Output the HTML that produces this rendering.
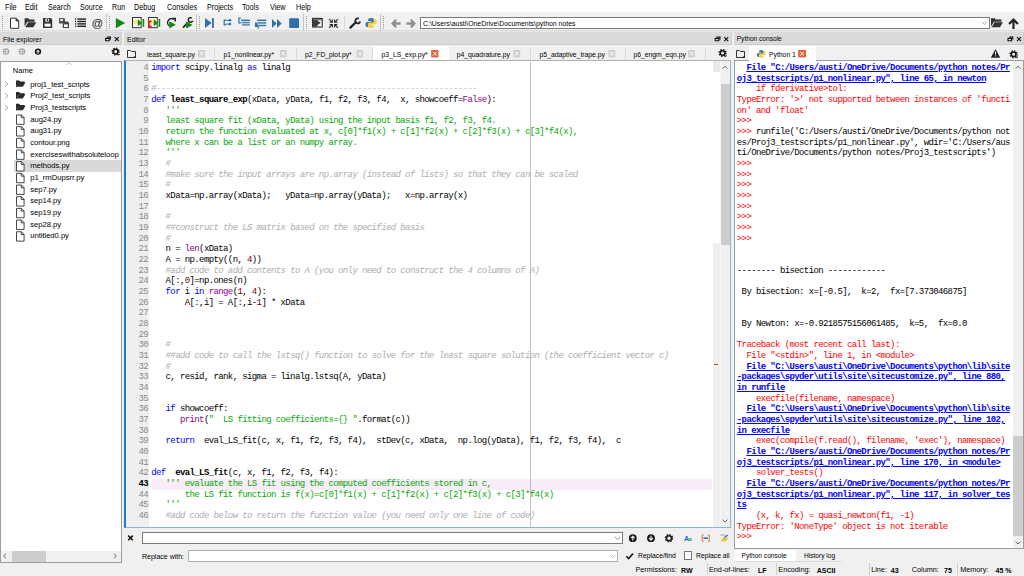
<!DOCTYPE html><html><head><meta charset="utf-8"><style>
*{margin:0;padding:0;box-sizing:border-box}
html,body{width:1024px;height:576px;overflow:hidden;background:#f0f0f0;font-family:"Liberation Sans",sans-serif;color:#000}
.a{position:absolute}
.t{position:absolute;white-space:pre;line-height:1;font-family:"Liberation Sans",sans-serif}
.title{background:#dadada;border-bottom:1px solid #cdcdcd;border-right:1px solid #cdcdcd;border-top:1px solid #e6e6e6}
.box{background:#fff;border:1px solid #a0a0a0}
.code{position:absolute;font-family:"Liberation Mono",monospace;font-size:9px;letter-spacing:-0.61px;line-height:10.667px;white-space:pre;height:10.667px}
.ln{position:absolute;font-family:"Liberation Mono",monospace;font-size:9px;letter-spacing:-0.61px;line-height:10.667px;text-align:right;color:#8a8a8a;width:24px}
.kw{color:#0000ff}.bi{color:#900090}.df{font-weight:bold}.cm{color:#adadad;font-style:italic}.st{color:#00aa00}.nu{color:#800000}
.red{color:#ff0000}.blu{color:#0000ff;font-weight:bold;text-decoration:underline}
</style></head><body>
<div class="a" style="left:0px;top:0px;width:1024px;height:12px;background:#fff"></div>
<div class="t" style="left:4.50px;top:3.66px;font-size:8.2px;transform:scaleX(0.88);transform-origin:0 0;">File</div>
<div class="t" style="left:25.00px;top:3.66px;font-size:8.2px;transform:scaleX(0.88);transform-origin:0 0;">Edit</div>
<div class="t" style="left:47.50px;top:3.66px;font-size:8.2px;transform:scaleX(0.88);transform-origin:0 0;">Search</div>
<div class="t" style="left:79.50px;top:3.66px;font-size:8.2px;transform:scaleX(0.88);transform-origin:0 0;">Source</div>
<div class="t" style="left:112.00px;top:3.66px;font-size:8.2px;transform:scaleX(0.88);transform-origin:0 0;">Run</div>
<div class="t" style="left:134.00px;top:3.66px;font-size:8.2px;transform:scaleX(0.88);transform-origin:0 0;">Debug</div>
<div class="t" style="left:166.70px;top:3.66px;font-size:8.2px;transform:scaleX(0.88);transform-origin:0 0;">Consoles</div>
<div class="t" style="left:206.60px;top:3.66px;font-size:8.2px;transform:scaleX(0.88);transform-origin:0 0;">Projects</div>
<div class="t" style="left:242.30px;top:3.66px;font-size:8.2px;transform:scaleX(0.88);transform-origin:0 0;">Tools</div>
<div class="t" style="left:270.00px;top:3.66px;font-size:8.2px;transform:scaleX(0.88);transform-origin:0 0;">View</div>
<div class="t" style="left:295.50px;top:3.66px;font-size:8.2px;transform:scaleX(0.88);transform-origin:0 0;">Help</div>
<div class="a" style="left:0px;top:12px;width:1024px;height:19px;background:#f0f0f0"></div>
<div class="a" style="left:0px;top:12.5px;width:1024px;height:1.5px;background:#f6f6f6"></div>
<div class="a" style="left:0px;top:30px;width:1024px;height:1px;background:#dcdcdc"></div>
<div class="a" style="left:420px;top:17px;width:570px;height:12px;background:#fff;border:1px solid #7a7a7a"></div>
<div class="t" style="left:423.00px;top:20.96px;font-size:6.9px;">C:\Users\austi\OneDrive\Documents\python notes</div>
<div class="a title" style="left:0;top:31px;width:122px;height:14px"></div>
<div class="t" style="left:3.00px;top:35.87px;font-size:7.0px;">File explorer</div>
<div class="a" style="left:0px;top:61px;width:122px;height:502px;background:#fff;border:1px solid #9c9c9c"></div>
<div class="t" style="left:12.80px;top:66.65px;font-size:7.5px;">Name</div>
<div class="a" style="left:14px;top:160px;width:107px;height:11.5px;background:#d9d9d9"></div>
<div class="a" style="left:1px;top:62px;width:120px;height:488px;overflow:hidden">
<div class="t" style="left:29.2px;top:18.58px;font-size:7.7px;letter-spacing:-0.05px">proj1_test_scripts</div>
<div class="t" style="left:29.2px;top:30.26px;font-size:7.7px;letter-spacing:-0.05px">Proj2_test_scripts</div>
<div class="t" style="left:29.2px;top:41.94px;font-size:7.7px;letter-spacing:-0.05px">Proj3_testscripts</div>
<div class="t" style="left:29.2px;top:53.62px;font-size:7.7px;letter-spacing:-0.05px">aug24.py</div>
<div class="t" style="left:29.2px;top:65.30px;font-size:7.7px;letter-spacing:-0.05px">aug31.py</div>
<div class="t" style="left:29.2px;top:76.98px;font-size:7.7px;letter-spacing:-0.05px">contour.png</div>
<div class="t" style="left:29.2px;top:88.66px;font-size:7.7px;letter-spacing:-0.05px">exerciseswithabsoluteloop</div>
<div class="t" style="left:29.2px;top:100.34px;font-size:7.7px;letter-spacing:-0.05px">methods.py</div>
<div class="t" style="left:29.2px;top:112.02px;font-size:7.7px;letter-spacing:-0.05px">p1_rmDupsrr.py</div>
<div class="t" style="left:29.2px;top:123.70px;font-size:7.7px;letter-spacing:-0.05px">sep7.py</div>
<div class="t" style="left:29.2px;top:135.38px;font-size:7.7px;letter-spacing:-0.05px">sep14.py</div>
<div class="t" style="left:29.2px;top:147.06px;font-size:7.7px;letter-spacing:-0.05px">sep19.py</div>
<div class="t" style="left:29.2px;top:158.74px;font-size:7.7px;letter-spacing:-0.05px">sep28.py</div>
<div class="t" style="left:29.2px;top:170.42px;font-size:7.7px;letter-spacing:-0.05px">untitled0.py</div>
</div>
<div class="a" style="left:1px;top:551px;width:120px;height:11px;background:#f0f0f0"></div>
<div class="a" style="left:12px;top:551px;width:34px;height:11px;background:#cdcdcd"></div>
<svg class="a" style="left:0;top:0" width="124" height="576" viewBox="0 0 124 576"><path d="M5.2 81.60l2.6 2.6-2.6 2.6" fill="none" stroke="#8a8a8a" stroke-width="0.9"/><path d="M16 80.40h3.2l1 1.2h4.4v1.8h-6.2l-2.4 4.4z" fill="#2b2b2b"/><path d="M16.4 86.80l2.6-4.2h6.4l-2.6 4.2z" fill="#2b2b2b"/><path d="M5.2 93.28l2.6 2.6-2.6 2.6" fill="none" stroke="#8a8a8a" stroke-width="0.9"/><path d="M16 92.08h3.2l1 1.2h4.4v1.8h-6.2l-2.4 4.4z" fill="#2b2b2b"/><path d="M16.4 98.48l2.6-4.2h6.4l-2.6 4.2z" fill="#2b2b2b"/><path d="M5.2 104.96l2.6 2.6-2.6 2.6" fill="none" stroke="#8a8a8a" stroke-width="0.9"/><path d="M16 103.76h3.2l1 1.2h4.4v1.8h-6.2l-2.4 4.4z" fill="#2b2b2b"/><path d="M16.4 110.16l2.6-4.2h6.4l-2.6 4.2z" fill="#2b2b2b"/><path d="M16.5 114.94h5l2.6 2.6v6.8h-7.6z" fill="#fff" stroke="#333" stroke-width="0.9"/><path d="M21.3 114.94v2.8h2.8" fill="none" stroke="#333" stroke-width="0.9"/><path d="M16.5 126.62h5l2.6 2.6v6.8h-7.6z" fill="#fff" stroke="#333" stroke-width="0.9"/><path d="M21.3 126.62v2.8h2.8" fill="none" stroke="#333" stroke-width="0.9"/><path d="M16.5 138.30h5l2.6 2.6v6.8h-7.6z" fill="#fff" stroke="#333" stroke-width="0.9"/><path d="M21.3 138.30v2.8h2.8" fill="none" stroke="#333" stroke-width="0.9"/><path d="M16.5 149.98h5l2.6 2.6v6.8h-7.6z" fill="#fff" stroke="#333" stroke-width="0.9"/><path d="M21.3 149.98v2.8h2.8" fill="none" stroke="#333" stroke-width="0.9"/><path d="M16.5 161.66h5l2.6 2.6v6.8h-7.6z" fill="#fff" stroke="#333" stroke-width="0.9"/><path d="M21.3 161.66v2.8h2.8" fill="none" stroke="#333" stroke-width="0.9"/><path d="M16.5 173.34h5l2.6 2.6v6.8h-7.6z" fill="#fff" stroke="#333" stroke-width="0.9"/><path d="M21.3 173.34v2.8h2.8" fill="none" stroke="#333" stroke-width="0.9"/><path d="M16.5 185.02h5l2.6 2.6v6.8h-7.6z" fill="#fff" stroke="#333" stroke-width="0.9"/><path d="M21.3 185.02v2.8h2.8" fill="none" stroke="#333" stroke-width="0.9"/><path d="M16.5 196.70h5l2.6 2.6v6.8h-7.6z" fill="#fff" stroke="#333" stroke-width="0.9"/><path d="M21.3 196.70v2.8h2.8" fill="none" stroke="#333" stroke-width="0.9"/><path d="M16.5 208.38h5l2.6 2.6v6.8h-7.6z" fill="#fff" stroke="#333" stroke-width="0.9"/><path d="M21.3 208.38v2.8h2.8" fill="none" stroke="#333" stroke-width="0.9"/><path d="M16.5 220.06h5l2.6 2.6v6.8h-7.6z" fill="#fff" stroke="#333" stroke-width="0.9"/><path d="M21.3 220.06v2.8h2.8" fill="none" stroke="#333" stroke-width="0.9"/><path d="M16.5 231.74h5l2.6 2.6v6.8h-7.6z" fill="#fff" stroke="#333" stroke-width="0.9"/><path d="M21.3 231.74v2.8h2.8" fill="none" stroke="#333" stroke-width="0.9"/><path d="M66.5 65l2.5-2.5 2.5 2.5" fill="none" stroke="#b0b0b0" stroke-width="0.8"/><path d="M6 553.6l-2.4 2.4 2.4 2.4M114 553.6l2.4 2.4-2.4 2.4" fill="none" stroke="#555" stroke-width="0.9"/></svg>
<div class="a title" style="left:124px;top:31px;width:608px;height:14px"></div>
<div class="t" style="left:127.00px;top:35.87px;font-size:7.0px;">Editor</div>
<div class="a" style="left:139px;top:47px;width:592px;height:13px;background:#f0f0f0"></div>
<div class="a" style="left:214.2px;top:48px;width:1px;height:12px;background:#dadada"></div>
<div class="t" style="left:147.00px;top:51.84px;font-size:6.8px;">least_square.py</div>
<div class="a" style="left:296.3px;top:48px;width:1px;height:12px;background:#dadada"></div>
<div class="t" style="left:223.50px;top:51.84px;font-size:6.8px;">p1_nonlinear.py*</div>
<div class="a" style="left:372.1px;top:48px;width:1px;height:12px;background:#dadada"></div>
<div class="t" style="left:304.90px;top:51.84px;font-size:6.8px;">p2_FD_plot.py*</div>
<div class="a" style="left:372.6px;top:46px;width:76.79999999999995px;height:15px;background:#fff"></div>
<div class="t" style="left:381.60px;top:51.84px;font-size:6.8px;">p3_LS_exp.py*</div>
<div class="a" style="left:529.8px;top:48px;width:1px;height:12px;background:#dadada"></div>
<div class="t" style="left:456.70px;top:51.84px;font-size:6.8px;">p4_quadrature.py</div>
<div class="a" style="left:624.8px;top:48px;width:1px;height:12px;background:#dadada"></div>
<div class="t" style="left:539.60px;top:51.84px;font-size:6.8px;">p5_adaptive_trape.py</div>
<div class="a" style="left:704.7px;top:48px;width:1px;height:12px;background:#dadada"></div>
<div class="t" style="left:633.40px;top:51.84px;font-size:6.8px;">p6_engm_eqn.py</div>
<div class="a" style="left:139px;top:60px;width:592px;height:1px;background:#c8c8c8"></div>
<div class="a" style="left:124px;top:60px;width:607px;height:468px;background:#fff;border:1px solid #8cb4d8;border-top-color:#b4b0ae;border-left:2px solid #1f78d0"></div>
<div class="a" style="left:126px;top:61px;width:23px;height:466px;background:#efefef"></div>
<div class="a" style="left:734px;top:60px;width:290px;height:489px;background:#fff;border:1px solid #9c9c9c"></div>
<div class="a" style="left:152px;top:479.01px;width:560px;height:10.667px;background:#f7ecf8"></div>
<div class="a" style="left:530px;top:62px;width:1px;height:465px;background:#c0c0c0"></div>
<div class="a" style="left:126px;top:62px;width:586px;height:465px;overflow:hidden">
<div class="ln" style="left:-2px;top:1.00px;">4</div>
<div class="code" style="left:25.2px;top:1.00px"><span class="kw">import</span> scipy.linalg <span class="kw">as</span> linalg</div>
<div class="ln" style="left:-2px;top:11.67px;">5</div>
<div class="code" style="left:25.2px;top:11.67px"></div>
<div class="ln" style="left:-2px;top:22.33px;">6</div>
<div class="code" style="left:25.2px;top:22.33px"><span class="cm">#-------------------------------------------------------------------</span></div>
<div class="ln" style="left:-2px;top:33.00px;">7</div>
<div class="code" style="left:25.2px;top:33.00px"><span class="kw">def</span> <span class="df">least_square_exp</span>(xData, yData, f1, f2, f3, f4,  x, showcoeff=<span class="bi">False</span>):</div>
<div class="ln" style="left:-2px;top:43.67px;">8</div>
<div class="code" style="left:25.2px;top:43.67px">   <span class="st">&#x27;&#x27;&#x27;</span></div>
<div class="ln" style="left:-2px;top:54.34px;">9</div>
<div class="code" style="left:25.2px;top:54.34px">   <span class="st">least square fit (xData, yData) using the input basis f1, f2, f3, f4.</span></div>
<div class="ln" style="left:-2px;top:65.00px;">10</div>
<div class="code" style="left:25.2px;top:65.00px">   <span class="st">return the function evaluated at x, c[0]*f1(x) + c[1]*f2(x) + c[2]*f3(x) + c[3]*f4(x),</span></div>
<div class="ln" style="left:-2px;top:75.67px;">11</div>
<div class="code" style="left:25.2px;top:75.67px">   <span class="st">where x can be a list or an numpy array.</span></div>
<div class="ln" style="left:-2px;top:86.34px;">12</div>
<div class="code" style="left:25.2px;top:86.34px">   <span class="st">&#x27;&#x27;&#x27;</span></div>
<div class="ln" style="left:-2px;top:97.00px;">13</div>
<div class="code" style="left:25.2px;top:97.00px">   <span class="cm">#</span></div>
<div class="ln" style="left:-2px;top:107.67px;">14</div>
<div class="code" style="left:25.2px;top:107.67px">   <span class="cm">#make sure the input arrays are np.array (instead of lists) so that they can be scaled</span></div>
<div class="ln" style="left:-2px;top:118.34px;">15</div>
<div class="code" style="left:25.2px;top:118.34px">   <span class="cm">#</span></div>
<div class="ln" style="left:-2px;top:129.00px;">16</div>
<div class="code" style="left:25.2px;top:129.00px">   xData=np.array(xData);   yData=np.array(yData);   x=np.array(x)</div>
<div class="ln" style="left:-2px;top:139.67px;">17</div>
<div class="code" style="left:25.2px;top:139.67px"></div>
<div class="ln" style="left:-2px;top:150.34px;">18</div>
<div class="code" style="left:25.2px;top:150.34px">   <span class="cm">#</span></div>
<div class="ln" style="left:-2px;top:161.00px;">19</div>
<div class="code" style="left:25.2px;top:161.00px">   <span class="cm">##construct the LS matrix based on the specified basis</span></div>
<div class="ln" style="left:-2px;top:171.67px;">20</div>
<div class="code" style="left:25.2px;top:171.67px">   <span class="cm">#</span></div>
<div class="ln" style="left:-2px;top:182.34px;">21</div>
<div class="code" style="left:25.2px;top:182.34px">   n = <span class="bi">len</span>(xData)</div>
<div class="ln" style="left:-2px;top:193.01px;">22</div>
<div class="code" style="left:25.2px;top:193.01px">   A = np.empty((n, <span class="nu">4</span>))</div>
<div class="ln" style="left:-2px;top:203.67px;">23</div>
<div class="code" style="left:25.2px;top:203.67px">   <span class="cm">#add code to add contents to A (you only need to construct the 4 columns of A)</span></div>
<div class="ln" style="left:-2px;top:214.34px;">24</div>
<div class="code" style="left:25.2px;top:214.34px">   A[:,<span class="nu">0</span>]=np.ones(n)</div>
<div class="ln" style="left:-2px;top:225.01px;">25</div>
<div class="code" style="left:25.2px;top:225.01px">   <span class="kw">for</span> i <span class="kw">in</span> <span class="bi">range</span>(<span class="nu">1</span>, <span class="nu">4</span>):</div>
<div class="ln" style="left:-2px;top:235.67px;">26</div>
<div class="code" style="left:25.2px;top:235.67px">       A[:,i] = A[:,i-<span class="nu">1</span>] * xData</div>
<div class="ln" style="left:-2px;top:246.34px;">27</div>
<div class="code" style="left:25.2px;top:246.34px"></div>
<div class="ln" style="left:-2px;top:257.01px;">28</div>
<div class="code" style="left:25.2px;top:257.01px"></div>
<div class="ln" style="left:-2px;top:267.68px;">29</div>
<div class="code" style="left:25.2px;top:267.68px"></div>
<div class="ln" style="left:-2px;top:278.34px;">30</div>
<div class="code" style="left:25.2px;top:278.34px">   <span class="cm">#</span></div>
<div class="ln" style="left:-2px;top:289.01px;">31</div>
<div class="code" style="left:25.2px;top:289.01px">   <span class="cm">##add code to call the lstsq() function to solve for the least square solution (the coefficient vector c)</span></div>
<div class="ln" style="left:-2px;top:299.68px;">32</div>
<div class="code" style="left:25.2px;top:299.68px">   <span class="cm">#</span></div>
<div class="ln" style="left:-2px;top:310.34px;">33</div>
<div class="code" style="left:25.2px;top:310.34px">   c, resid, rank, sigma = linalg.lstsq(A, yData)</div>
<div class="ln" style="left:-2px;top:321.01px;">34</div>
<div class="code" style="left:25.2px;top:321.01px"></div>
<div class="ln" style="left:-2px;top:331.68px;">35</div>
<div class="code" style="left:25.2px;top:331.68px"></div>
<div class="ln" style="left:-2px;top:342.34px;">36</div>
<div class="code" style="left:25.2px;top:342.34px">   <span class="kw">if</span> showcoeff:</div>
<div class="ln" style="left:-2px;top:353.01px;">37</div>
<div class="code" style="left:25.2px;top:353.01px">      <span class="bi">print</span>(<span class="st">&quot;  LS fitting coefficients={} &quot;</span>.format(c))</div>
<div class="ln" style="left:-2px;top:363.68px;">38</div>
<div class="code" style="left:25.2px;top:363.68px"></div>
<div class="ln" style="left:-2px;top:374.34px;">39</div>
<div class="code" style="left:25.2px;top:374.34px">   <span class="kw">return</span>  eval_LS_fit(c, x, f1, f2, f3, f4),  stDev(c, xData,  np.log(yData), f1, f2, f3, f4),  c</div>
<div class="ln" style="left:-2px;top:385.01px;">40</div>
<div class="code" style="left:25.2px;top:385.01px"></div>
<div class="ln" style="left:-2px;top:395.68px;">41</div>
<div class="code" style="left:25.2px;top:395.68px"></div>
<div class="ln" style="left:-2px;top:406.35px;">42</div>
<div class="code" style="left:25.2px;top:406.35px"><span class="kw">def</span>  <span class="df">eval_LS_fit</span>(c, x, f1, f2, f3, f4):</div>
<div class="ln" style="left:-2px;top:417.01px;color:#000;font-weight:bold">43</div>
<div class="code" style="left:25.2px;top:417.01px">   <span class="st">&#x27;&#x27;&#x27; evaluate the LS fit using the computed coefficients stored in c,</span></div>
<div class="ln" style="left:-2px;top:427.68px;">44</div>
<div class="code" style="left:25.2px;top:427.68px">       <span class="st">the LS fit function is f(x)=c[0]*f1(x) + c[1]*f2(x) + c[2]*f3(x) + c[3]*f4(x)</span></div>
<div class="ln" style="left:-2px;top:438.35px;">45</div>
<div class="code" style="left:25.2px;top:438.35px">   <span class="st">&#x27;&#x27;&#x27;</span></div>
<div class="ln" style="left:-2px;top:449.01px;">46</div>
<div class="code" style="left:25.2px;top:449.01px">   <span class="cm">#add code below to return the function value (you need only one line of code)</span></div>
</div>
<div class="a" style="left:735px;top:62px;width:277px;height:486px;overflow:hidden">
<div class="code" style="left:1.8px;top:1.00px">  <span class="blu">File &quot;C:/Users/austi/OneDrive/Documents/python notes/Pr</span></div>
<div class="code" style="left:1.8px;top:11.67px"><span class="blu">oj3_testscripts/p1_nonlinear.py&quot;, line 65, in newton</span></div>
<div class="code" style="left:1.8px;top:22.33px"><span class="red">    if fderivative&gt;tol:</span></div>
<div class="code" style="left:1.8px;top:33.00px"><span class="red">TypeError: &#x27;&gt;&#x27; not supported between instances of &#x27;functi</span></div>
<div class="code" style="left:1.8px;top:43.67px"><span class="red">on&#x27; and &#x27;float&#x27;</span></div>
<div class="code" style="left:1.8px;top:54.34px"><span class="red">&gt;&gt;&gt;</span></div>
<div class="code" style="left:1.8px;top:65.00px"><span class="red">&gt;&gt;&gt; </span><span class="">runfile(&#x27;C:/Users/austi/OneDrive/Documents/python not</span></div>
<div class="code" style="left:1.8px;top:75.67px"><span class="">es/Proj3_testscripts/p1_nonlinear.py&#x27;, wdir=&#x27;C:/Users/aus</span></div>
<div class="code" style="left:1.8px;top:86.34px"><span class="">ti/OneDrive/Documents/python notes/Proj3_testscripts&#x27;)</span></div>
<div class="code" style="left:1.8px;top:97.00px"><span class="red">&gt;&gt;&gt;</span></div>
<div class="code" style="left:1.8px;top:107.67px"><span class="red">&gt;&gt;&gt;</span></div>
<div class="code" style="left:1.8px;top:118.34px"><span class="red">&gt;&gt;&gt;</span></div>
<div class="code" style="left:1.8px;top:129.00px"><span class="red">&gt;&gt;&gt;</span></div>
<div class="code" style="left:1.8px;top:139.67px"><span class="red">&gt;&gt;&gt;</span></div>
<div class="code" style="left:1.8px;top:150.34px"><span class="red">&gt;&gt;&gt;</span></div>
<div class="code" style="left:1.8px;top:161.00px"><span class="red">&gt;&gt;&gt;</span></div>
<div class="code" style="left:1.8px;top:171.67px"><span class="red">&gt;&gt;&gt;</span></div>
<div class="code" style="left:1.8px;top:182.34px"></div>
<div class="code" style="left:1.8px;top:193.01px"></div>
<div class="code" style="left:1.8px;top:203.67px"><span class="">-------- bisection ------------</span></div>
<div class="code" style="left:1.8px;top:214.34px"></div>
<div class="code" style="left:1.8px;top:225.01px"><span class=""> By bisection: x=[-0.5],  k=2,  fx=[7.373046875]</span></div>
<div class="code" style="left:1.8px;top:235.67px"></div>
<div class="code" style="left:1.8px;top:246.34px"></div>
<div class="code" style="left:1.8px;top:257.01px"><span class=""> By Newton: x=-0.9218575156061485,  k=5,  fx=0.0</span></div>
<div class="code" style="left:1.8px;top:267.68px"></div>
<div class="code" style="left:1.8px;top:278.34px"><span class="red">Traceback (most recent call last):</span></div>
<div class="code" style="left:1.8px;top:289.01px"><span class="red">  File &quot;&lt;stdin&gt;&quot;, line 1, in &lt;module&gt;</span></div>
<div class="code" style="left:1.8px;top:299.68px">  <span class="blu">File &quot;C:\Users\austi\OneDrive\Documents\python\lib\site</span></div>
<div class="code" style="left:1.8px;top:310.34px"><span class="blu">-packages\spyder\utils\site\sitecustomize.py&quot;, line 880,</span></div>
<div class="code" style="left:1.8px;top:321.01px"><span class="blu">in runfile</span></div>
<div class="code" style="left:1.8px;top:331.68px"><span class="red">    execfile(filename, namespace)</span></div>
<div class="code" style="left:1.8px;top:342.34px">  <span class="blu">File &quot;C:\Users\austi\OneDrive\Documents\python\lib\site</span></div>
<div class="code" style="left:1.8px;top:353.01px"><span class="blu">-packages\spyder\utils\site\sitecustomize.py&quot;, line 102,</span></div>
<div class="code" style="left:1.8px;top:363.68px"><span class="blu">in execfile</span></div>
<div class="code" style="left:1.8px;top:374.34px"><span class="red">    exec(compile(f.read(), filename, &#x27;exec&#x27;), namespace)</span></div>
<div class="code" style="left:1.8px;top:385.01px">  <span class="blu">File &quot;C:/Users/austi/OneDrive/Documents/python notes/Pr</span></div>
<div class="code" style="left:1.8px;top:395.68px"><span class="blu">oj3_testscripts/p1_nonlinear.py&quot;, line 170, in &lt;module&gt;</span></div>
<div class="code" style="left:1.8px;top:406.35px"><span class="red">    solver_tests()</span></div>
<div class="code" style="left:1.8px;top:417.01px">  <span class="blu">File &quot;C:/Users/austi/OneDrive/Documents/python notes/Pr</span></div>
<div class="code" style="left:1.8px;top:427.68px"><span class="blu">oj3_testscripts/p1_nonlinear.py&quot;, line 117, in solver_tes</span></div>
<div class="code" style="left:1.8px;top:438.35px"><span class="blu">ts</span></div>
<div class="code" style="left:1.8px;top:449.01px"><span class="red">    (x, k, fx) = quasi_newton(f1, -1)</span></div>
<div class="code" style="left:1.8px;top:459.68px"><span class="red">TypeError: &#x27;NoneType&#x27; object is not iterable</span></div>
<div class="code" style="left:1.8px;top:470.35px"><span class="red">&gt;&gt;&gt;</span></div>
</div>
<div class="a title" style="left:734px;top:31px;width:290px;height:14px"></div>
<div class="t" style="left:736.70px;top:36.21px;font-size:6.6px;">Python console</div>
<div class="a" style="left:748.6px;top:46px;width:67.3px;height:15px;background:#fff"></div>
<div class="t" style="left:769.00px;top:51.84px;font-size:6.8px;">Python 1</div>
<div class="a" style="left:712.5px;top:61px;width:7px;height:11px;background:#e8e8e8"></div>
<div class="a" style="left:712.5px;top:243px;width:7px;height:284px;background:#efefef"></div>
<div class="a" style="left:720px;top:61px;width:10px;height:466px;background:#f0f0f0"></div>
<div class="a" style="left:720px;top:84px;width:10px;height:160.5px;background:#cdcdcd"></div>
<div class="a" style="left:713.6px;top:364px;width:4.8px;height:1.2px;background:#e8300a"></div>
<div class="a" style="left:719.5px;top:61px;width:1px;height:466px;background:#f8f8f8"></div>
<svg class="a" style="left:700px;top:55px" width="40" height="480" viewBox="700 55 40 480"><path d="M722.6 68.6l2.4-2.4 2.4 2.4M722.6 519.6l2.4 2.4 2.4-2.4" fill="none" stroke="#555" stroke-width="0.9"/></svg>
<div class="a" style="left:142px;top:532px;width:481px;height:12px;background:#fff;border:1px solid #7a7a7a"></div>
<div class="a" style="left:188px;top:550.4px;width:430px;height:11.2px;background:#fff;border:1px solid #b0b0b0"></div>
<div class="t" style="left:142.00px;top:553.27px;font-size:7.0px;">Replace with:</div>
<div class="t" style="left:638.00px;top:553.44px;font-size:6.8px;">Replace/find</div>
<div class="t" style="left:696.00px;top:553.44px;font-size:6.8px;">Replace all</div>
<div class="a" style="left:684px;top:551px;width:8.4px;height:9px;background:#fff;border:1px solid #777"></div>
<svg class="a" style="left:0;top:0" width="1024" height="576" viewBox="0 0 1024 576"><path d="M128.2 535.6l4.6 4.6M132.8 535.6l-4.6 4.6" stroke="#111" stroke-width="1.5"/><path d="M615 537l2.6 2.6 2.6-2.6" fill="none" stroke="#777" stroke-width="0.8"/><path d="M610 555l2.6 2.6 2.6-2.6" fill="none" stroke="#aaa" stroke-width="0.8"/><circle cx="632.8" cy="538.2" r="3.9" fill="#1a1a1a"/><path d="M632.8 540.6v-4M630.9 538.2l1.9-2 1.9 2" fill="none" stroke="#fff" stroke-width="1.1"/><circle cx="651" cy="538.2" r="3.9" fill="#1a1a1a"/><path d="M651 535.8v4M649.1 538.2l1.9 2 1.9-2" fill="none" stroke="#fff" stroke-width="1.1"/><circle cx="669" cy="538.2" r="2.5" fill="none" stroke="#1a1a1a" stroke-width="1.6"/><circle cx="669" cy="538.2" r="3.6" fill="none" stroke="#1a1a1a" stroke-width="1.4" stroke-dasharray="1.4 1.42"/><text x="684" y="541" font-family="Liberation Sans" font-weight="bold" font-size="7" fill="#2060d0">A</text><text x="688.6" y="541" font-family="Liberation Sans" font-weight="bold" font-size="6" fill="#30a030">a</text><path d="M703.6 535h-1.4v6.4h1.4M707.8 535h1.4v6.4h-1.4" fill="none" stroke="#e07030" stroke-width="1"/><rect x="703.4" y="537.4" width="4.6" height="1.6" fill="#2878d0"/><path d="M721 541.2l2-3.6h5l-2 3.6z" fill="#f0c030"/><path d="M723.4 537.4l3.4-3 1.4 1.2-2.4 2z" fill="#3a7ad0"/><path d="M720.6 535h4" stroke="#888" stroke-width="0.8"/><path d="M626.4 556.2l2.2 2.4 4.4-5" fill="none" stroke="#1a1a1a" stroke-width="1.6"/></svg>
<div class="a" style="left:1012.7px;top:61px;width:10.3px;height:487px;background:#f0f0f0"></div>
<div class="a" style="left:1012.7px;top:436px;width:10.3px;height:100px;background:#cdcdcd"></div>
<div class="a" style="left:734.5px;top:549.5px;width:61.5px;height:12px;background:#fff"></div>
<div class="a" style="left:734px;top:561px;width:108px;height:1px;background:#dcdcdc"></div>
<div class="t" style="left:741.50px;top:553.01px;font-size:6.6px;">Python console</div>
<div class="t" style="left:804.00px;top:553.01px;font-size:6.6px;">History log</div>
<svg class="a" style="left:1000px;top:55px" width="24" height="500" viewBox="1000 55 24 500"><path d="M1015.6 68.6l2.4-2.4 2.4 2.4M1015.6 541.6l2.4 2.4 2.4-2.4" fill="none" stroke="#555" stroke-width="0.9"/></svg>
<div class="t" style="left:635.50px;top:566.46px;font-size:7.25px;">Permissions:</div>
<div class="t" style="left:681.00px;top:566.67px;font-size:7.0px;font-weight:bold">RW</div>
<div class="a" style="left:707px;top:563px;width:1px;height:12px;background:#d0d0d0"></div>
<div class="t" style="left:709.00px;top:566.46px;font-size:7.25px;">End-of-lines:</div>
<div class="t" style="left:758.00px;top:566.67px;font-size:7.0px;font-weight:bold">LF</div>
<div class="a" style="left:775.5px;top:563px;width:1px;height:12px;background:#d0d0d0"></div>
<div class="t" style="left:778.30px;top:566.46px;font-size:7.25px;">Encoding:</div>
<div class="t" style="left:816.70px;top:566.67px;font-size:7.0px;font-weight:bold">ASCII</div>
<div class="a" style="left:868.5px;top:563px;width:1px;height:12px;background:#d0d0d0"></div>
<div class="t" style="left:871.20px;top:566.46px;font-size:7.25px;">Line:</div>
<div class="t" style="left:890.80px;top:566.67px;font-size:7.0px;font-weight:bold">43</div>
<div class="t" style="left:911.80px;top:566.46px;font-size:7.25px;">Column:</div>
<div class="t" style="left:944.00px;top:566.67px;font-size:7.0px;font-weight:bold">75</div>
<div class="a" style="left:957px;top:563px;width:1px;height:12px;background:#d0d0d0"></div>
<div class="t" style="left:960.20px;top:566.46px;font-size:7.25px;">Memory:</div>
<div class="t" style="left:995.50px;top:566.67px;font-size:7.0px;font-weight:bold">45 %</div>
<svg class="a" style="left:0;top:0" width="1024" height="576" viewBox="0 0 1024 576">
<g fill="#9a9a9a">
<rect x="2" y="16" width="1" height="1"/><rect x="2" y="18" width="1" height="1"/><rect x="2" y="20" width="1" height="1"/><rect x="2" y="22" width="1" height="1"/><rect x="2" y="24" width="1" height="1"/><rect x="2" y="26" width="1" height="1"/><rect x="2" y="28" width="1" height="1"/>
</g>
<g fill="#9a9a9a">
<rect x="109" y="16" width="1" height="1"/><rect x="109" y="18" width="1" height="1"/><rect x="109" y="20" width="1" height="1"/><rect x="109" y="22" width="1" height="1"/><rect x="109" y="24" width="1" height="1"/><rect x="109" y="26" width="1" height="1"/><rect x="109" y="28" width="1" height="1"/>
<rect x="199" y="16" width="1" height="1"/><rect x="199" y="18" width="1" height="1"/><rect x="199" y="20" width="1" height="1"/><rect x="199" y="22" width="1" height="1"/><rect x="199" y="24" width="1" height="1"/><rect x="199" y="26" width="1" height="1"/><rect x="199" y="28" width="1" height="1"/>
<rect x="306" y="16" width="1" height="1"/><rect x="306" y="18" width="1" height="1"/><rect x="306" y="20" width="1" height="1"/><rect x="306" y="22" width="1" height="1"/><rect x="306" y="24" width="1" height="1"/><rect x="306" y="26" width="1" height="1"/><rect x="306" y="28" width="1" height="1"/>
<rect x="383" y="16" width="1" height="1"/><rect x="383" y="18" width="1" height="1"/><rect x="383" y="20" width="1" height="1"/><rect x="383" y="22" width="1" height="1"/><rect x="383" y="24" width="1" height="1"/><rect x="383" y="26" width="1" height="1"/><rect x="383" y="28" width="1" height="1"/>
</g>
<rect x="344" y="16" width="1" height="13" fill="#dcdcdc"/>
<g fill="#c4c4c4">
<rect x="106" y="14" width="1" height="17"/><rect x="196" y="14" width="1" height="17"/><rect x="303" y="14" width="1" height="17"/><rect x="380" y="14" width="1" height="17"/>
</g>
<!-- new file -->
<path d="M10.5 18.2H16.3L18.7 20.6V28.3H10.5Z" fill="#fff" stroke="#333" stroke-width="1"/>
<path d="M16 18.2V21H18.7" fill="#555" stroke="#333" stroke-width="0.8"/>
<!-- open folder -->
<path d="M24.6 18.3h3.6l1 1.3h5.3v2.2h-7.2l-2.7 4.7z" fill="#333"/>
<path d="M25.3 27.2l3-5h8l-3 5z" fill="#333"/>
<!-- save -->
<path d="M43 18h7.6l1.6 1.6V28H43z" fill="#333"/>
<rect x="45.4" y="18.6" width="3.4" height="3" fill="#fff"/><rect x="46.8" y="19" width="1.2" height="2" fill="#333"/>
<rect x="44.6" y="23.6" width="6" height="3" fill="#fff"/>
<!-- save all -->
<path d="M59 18h5l1 1v4.6h-6z" fill="#555"/><rect x="60.4" y="19" width="2.4" height="2" fill="#fff"/>
<path d="M62.8 21.4h4.8l1.4 1.4V28h-6.2z" fill="#444"/><rect x="64" y="24.4" width="3.8" height="2.6" fill="#fff"/>
<!-- list -->
<g fill="#222"><rect x="75" y="18.4" width="1.2" height="1.4"/><rect x="77.4" y="18.4" width="8.6" height="1.4"/>
<rect x="75" y="20.8" width="1.2" height="1.4"/><rect x="77.4" y="20.8" width="8.6" height="1.4"/>
<rect x="75" y="23.2" width="1.2" height="1.4"/><rect x="77.4" y="23.2" width="8.6" height="1.4"/>
<rect x="75" y="25.6" width="1.2" height="1.4"/><rect x="77.4" y="25.6" width="8.6" height="1.4"/></g>
<!-- @ -->
<text x="91.5" y="27.2" font-family="Liberation Sans" font-size="11.5" fill="#222">@</text>
<!-- run -->
<path d="M115.8 18V28.2L125.2 23.1Z" fill="#118811"/>
<!-- run cell -->
<rect x="132.5" y="17.5" width="8.6" height="10.2" fill="#fff" stroke="#333" stroke-width="1"/>
<rect x="133" y="19.6" width="7.6" height="4.6" fill="#f8ea8c"/>
<path d="M137.8 19.2V26.6L141.8 22.9Z" fill="#118811"/><rect x="142.6" y="19" width="1.6" height="7.8" fill="#118811"/>
<!-- run cell advance -->
<rect x="148.6" y="17.5" width="8.6" height="10.2" fill="#fff" stroke="#333" stroke-width="1"/>
<rect x="149.1" y="19.6" width="7.6" height="4.6" fill="#f8ea8c"/>
<path d="M153.8 19.2V26.6L157.8 22.9Z" fill="#118811"/><rect x="158.6" y="19" width="1.6" height="7.8" fill="#118811"/>
<path d="M151.6 21.4h-2.6v5h2.6" fill="none" stroke="#ff1010" stroke-width="1.6"/>
<!-- re-run -->
<path d="M173.8 19.4A3.8 3.8 0 1 0 169.2 25.8" fill="none" stroke="#1e1e1e" stroke-width="1.3"/>
<path d="M172.4 18.6h2.8v2.8" fill="none" stroke="#1e1e1e" stroke-width="1.5"/>
<path d="M169.2 21.2V28.4L175.8 24.8Z" fill="#118811"/>
<!-- wrench + run -->
<path d="M183 27.6l5.2-5.2" stroke="#2a2a2a" stroke-width="2"/>
<path d="M191.8 18A2.3 2.3 0 1 0 192.8 20.8" fill="none" stroke="#2a2a2a" stroke-width="1.6"/>
<path d="M186.2 21.4V28.4L192.6 24.9Z" fill="#118811"/>
<!-- debug blue -->
<g fill="#2f6fae">
<path d="M205 18V28L211.6 23Z"/><rect x="212" y="18" width="1.8" height="10"/>
<path d="M223.6 19.6h2.4v1.2h-1.2v3.4h1.2v1.4h-2.4z"/><rect x="226" y="19.8" width="3" height="1"/><rect x="226" y="23.6" width="3" height="1"/><circle cx="230" cy="20.3" r="1.3"/><circle cx="230" cy="24.1" r="1.3"/>
<path d="M238.3 17.5h2.6v1.2h-1.4v3.5h1.4v1.3h-2.6z"/><rect x="241.2" y="19.6" width="8.6" height="1.5"/><rect x="241.6" y="22.1" width="8.2" height="1.2"/><rect x="242" y="24.3" width="7.8" height="1.2"/>
<path d="M255 22.4h2.6v4.2h1.4v1.8h-1.4v-1.4h-2.6z"/><rect x="257.2" y="19.6" width="9" height="1.4"/><rect x="258" y="22.2" width="8.2" height="1.4"/><rect x="257.2" y="24.8" width="9" height="1.4"/>
<path d="M272 19V28L276.6 23.5Z"/><path d="M277 19V28L281.7 23.5Z"/>
<rect x="289.2" y="18.2" width="9.8" height="9.8" rx="0.8"/>
</g>
<!-- maximize -->
<rect x="312.6" y="18.4" width="9.6" height="8.6" fill="#fff" stroke="#2a2a2a" stroke-width="1.1"/>
<rect x="313" y="19.4" width="8.8" height="0.9" fill="#2a2a2a"/>
<rect x="313" y="20" width="4.4" height="6.6" fill="#3c3c3c"/>
<path d="M317 20.4l3.8 2.4-3.8 2.6z" fill="#3c3c3c"/>
<!-- fullscreen -->
<g fill="none" stroke="#2a2a2a" stroke-width="1.1">
<path d="M329 19.2l3 3M329.6 22.3h2.8v-2.8"/>
<path d="M338 19.2l-3 3M337.4 22.3h-2.8v-2.8"/>
<path d="M329 27.8l-0 0M329 27.8l3-3M329.6 24.6h2.8v2.8"/>
<path d="M338 27.8l-3-3M337.4 24.6h-2.8v2.8"/>
</g>
<!-- wrench -->
<path d="M350.4 27.6l5.4-5.4" stroke="#222" stroke-width="2.2" stroke-linecap="round"/>
<path d="M358.8 18.6A2.5 2.5 0 1 0 360.2 21.6" fill="none" stroke="#222" stroke-width="1.8"/>
<!-- python logo -->
<path d="M370.8 18.1c-2.4 0-2.6 1-2.6 1.6v1.6h2.7v.6h-3.6c-1.3 0-1.9 1-1.9 2.6 0 1.7.8 2.4 1.6 2.4h1.1v-1.4c0-1 .8-1.8 1.8-1.8h2.6c.9 0 1.6-.7 1.6-1.6v-2.2c0-.8-.7-1.8-3.3-1.8z" fill="#3b77a8"/>
<path d="M371.2 28.1c2.4 0 2.6-1 2.6-1.6v-1.6h-2.7v-.6h3.6c1.3 0 1.9-1 1.9-2.6 0-1.7-.8-2.4-1.6-2.4h-1.1v1.4c0 1-.8 1.8-1.8 1.8h-2.6c-.9 0-1.6.7-1.6 1.6v2.2c0 .8.7 1.8 3.3 1.8z" fill="#f7cf3d"/>
<!-- back / forward -->
<path d="M391 23.4l4.4-4.4 1.6 1.6-1.6 1.6h5.2v2.6h-5.2l1.6 1.6-1.6 1.6z" fill="#8e8e8e"/>
<path d="M416 23.4l-4.4-4.4-1.6 1.6 1.6 1.6h-5.2v2.6h5.2l-1.6 1.6 1.6 1.6z" fill="#8e8e8e"/>
<!-- combo arrow -->
<path d="M982 22l2.5 2.5 2.5-2.5" fill="none" stroke="#9a9a9a" stroke-width="0.8"/>
<!-- folder open right -->
<path d="M991 18.3h3.8l1 1.3h5.6v2.2h-7.4l-3 4.7z" fill="#333"/>
<path d="M991.6 27.2l3-5h8.4l-3 5z" fill="#333"/>
<!-- up arrow -->
<path d="M1013.5 18l5.2 5.2-1.6 1.6-2.5-2.5V29h-2.2v-6.7l-2.5 2.5-1.6-1.6z" fill="#222"/>

<!-- title bar float/close icons -->
<g fill="none" stroke="#111" stroke-width="1.1">
<path d="M107 37h3.4v2.6M105.6 38.4h3.6v2.4h-3.6z"/><path d="M114.8 37.2l4 4M118.8 37.2l-4 4"/>
<path d="M716.6 37h3.4v2.6M715.2 38.4h3.6v2.4h-3.6z"/><path d="M724.2 37.2l4 4M728.2 37.2l-4 4"/>
<path d="M1009.4 37h3.4v2.6M1008 38.4h3.6v2.4h-3.6z"/><path d="M1017 37.2l4 4M1021 37.2l-4 4"/>
</g>
<!-- file explorer nav circles -->
<circle cx="6" cy="51.6" r="2.7" fill="none" stroke="#a4a4a4" stroke-width="1.1"/><path d="M7.6 51.6H4.6M5.9 50.2l-1.3 1.4 1.3 1.4" fill="none" stroke="#a4a4a4" stroke-width="0.9"/>
<circle cx="22" cy="51.6" r="2.7" fill="none" stroke="#a4a4a4" stroke-width="1.1"/><path d="M20.4 51.6h3M22.1 50.2l1.3 1.4-1.3 1.4" fill="none" stroke="#a4a4a4" stroke-width="0.9"/>
<circle cx="38" cy="51.6" r="3.2" fill="#1a1a1a"/><path d="M38 53.8v-3.4M36.5 52l1.5-1.6 1.5 1.6" fill="none" stroke="#fff" stroke-width="1"/>
<!-- gears -->
<g id="gear">
<circle cx="115.6" cy="51.6" r="2.3" fill="none" stroke="#111" stroke-width="1.5"/>
<circle cx="115.6" cy="51.6" r="3.4" fill="none" stroke="#111" stroke-width="1.4" stroke-dasharray="1.35 1.32"/>
<path d="M117.4 54h2.8l-1.4 1.6z" fill="#111"/>
</g>
<g transform="translate(607,1.4)">
<circle cx="115.6" cy="51.6" r="2.3" fill="none" stroke="#111" stroke-width="1.5"/>
<circle cx="115.6" cy="51.6" r="3.4" fill="none" stroke="#111" stroke-width="1.4" stroke-dasharray="1.35 1.32"/>
<path d="M117.4 54h2.8l-1.4 1.6z" fill="#111"/>
</g>
<g transform="translate(898,2.6)">
<circle cx="115.6" cy="51.6" r="2.3" fill="none" stroke="#111" stroke-width="1.5"/>
<circle cx="115.6" cy="51.6" r="3.4" fill="none" stroke="#111" stroke-width="1.4" stroke-dasharray="1.35 1.32"/>
<path d="M117.4 54h2.8l-1.4 1.6z" fill="#111"/>
</g>
<!-- warning -->
<path d="M995.5 49L1000.2 57.8H990.8Z" fill="#222"/><rect x="995" y="51.6" width="1" height="3" fill="#fff"/><rect x="995" y="55.4" width="1" height="1" fill="#fff"/>
<!-- browse tabs icons -->
<path d="M127.5 50.5h3l1 1h4v6h-8z" fill="none" stroke="#333" stroke-width="1"/><path d="M133.6 56.6h2.6l-1.3 1.6z" fill="#111"/>
<path d="M736.5 50.5h3l1 1h4v6h-8z" fill="none" stroke="#333" stroke-width="1"/><path d="M742.6 56.6h2.6l-1.3 1.6z" fill="#111"/>
<!-- tab close boxes -->
<g fill="#cfcfcf">
<rect x="198" y="50" width="7" height="7.4"/><rect x="279.8" y="50" width="6.8" height="7.4"/><rect x="356.6" y="50" width="6.6" height="7.4"/>
<rect x="513.4" y="50" width="6.8" height="7.4"/><rect x="608.4" y="50" width="6.8" height="7.4"/><rect x="688.2" y="50" width="6.8" height="7.4"/>
</g>
<g stroke="#fff" stroke-width="0.9">
<path d="M199.8 51.8l3.4 3.8M203.2 51.8l-3.4 3.8"/><path d="M281.5 51.8l3.4 3.8M284.9 51.8l-3.4 3.8"/><path d="M358.2 51.8l3.4 3.8M361.6 51.8l-3.4 3.8"/>
<path d="M515.1 51.8l3.4 3.8M518.5 51.8l-3.4 3.8"/><path d="M610.1 51.8l3.4 3.8M613.5 51.8l-3.4 3.8"/><path d="M689.9 51.8l3.4 3.8M693.3 51.8l-3.4 3.8"/>
</g>
<rect x="431.2" y="50" width="7.2" height="7.4" fill="#e2603a"/><path d="M433 51.8l3.6 3.8M436.6 51.8l-3.6 3.8" stroke="#fff" stroke-width="1"/>
<rect x="798.2" y="50" width="7.8" height="7.4" fill="#e2603a"/><path d="M800.2 51.8l3.8 3.8M804 51.8l-3.8 3.8" stroke="#fff" stroke-width="1"/>
<!-- small python logo in console tab -->
<g transform="translate(757,50) scale(0.78) translate(-365.5,-18)">
<path d="M370.8 18.1c-2.4 0-2.6 1-2.6 1.6v1.6h2.7v.6h-3.6c-1.3 0-1.9 1-1.9 2.6 0 1.7.8 2.4 1.6 2.4h1.1v-1.4c0-1 .8-1.8 1.8-1.8h2.6c.9 0 1.6-.7 1.6-1.6v-2.2c0-.8-.7-1.8-3.3-1.8z" fill="#3b77a8"/>
<path d="M371.2 28.1c2.4 0 2.6-1 2.6-1.6v-1.6h-2.7v-.6h3.6c1.3 0 1.9-1 1.9-2.6 0-1.7-.8-2.4-1.6-2.4h-1.1v1.4c0 1-.8 1.8-1.8 1.8h-2.6c-.9 0-1.6.7-1.6 1.6v2.2c0 .8.7 1.8 3.3 1.8z" fill="#f7cf3d"/>
</g>
</svg>

</body></html>
